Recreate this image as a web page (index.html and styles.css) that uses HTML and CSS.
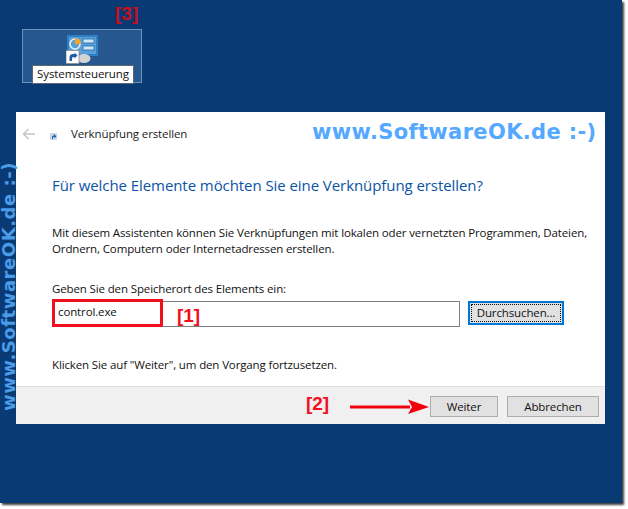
FILE: index.html
```html
<!DOCTYPE html>
<html lang="de">
<head>
<meta charset="utf-8">
<title>Verknüpfung erstellen</title>
<link rel="stylesheet" href="styles.css">
</head>
<body>
<div class="desktop">
  <div class="mark mark-3">[3]</div>
  <div class="shortcut">
    <svg class="shortcut-icon" width="32" height="29" viewBox="0 0 32 29">
      <rect x="1" y="0" width="31" height="21" fill="#2f7fc4"/>
      <rect x="3" y="2" width="27" height="17" fill="#5a9fd8"/>
      <circle cx="9" cy="9" r="5" fill="none" stroke="#e8f2fa" stroke-width="1.5"/>
      <path d="M9 3a6 6 0 0 1 6 6h-6z" fill="#f5a623"/>
      <rect x="17" y="4" width="11" height="4" fill="#cfe6f7" stroke="#1f6cab" stroke-width=".8"/>
      <rect x="17" y="11" width="11" height="4" fill="#cfe6f7" stroke="#1f6cab" stroke-width=".8"/>
      <ellipse cx="18" cy="23.500" rx="6.500" ry="4.500" fill="#d4d4d4"/>
      <rect x="0" y="15.500" width="13" height="13" fill="#fff" stroke="#8a8f96" stroke-width=".8"/>
      <path d="M3.500 26v-3.500a3.500 3.500 0 0 1 3.500-3.500h1.500v-1.500l3 3-3 3v-1.500h-1a1.500 1.500 0 0 0-1.500 1.500v2.500z" fill="#1d5fa8"/>
    </svg>
    <div class="shortcut-label">Systemsteuerung</div>
  </div>

  <section class="wizard">
    <header class="wizard-title">
      <svg class="back" width="14" height="12" viewBox="0 0 14 12">
        <path d="M13 6H2M6.500 1 1.500 6l5 5" fill="none" stroke="#c4c4c4" stroke-width="1.500"/>
      </svg>
      <svg class="mini" width="7" height="7" viewBox="0 0 7 7">
        <rect width="7" height="7" fill="#c9d6e6"/>
        <path d="M2 6V4a1.500 1.500 0 0 1 1.500-1.500H4V1l2.500 2.500L4 5V3.800a1 1 0 0 0-1 1V6z" fill="#1d5fa8"/>
      </svg>
      <span>Verknüpfung erstellen</span>
    </header>
    <div class="wizard-body">
      <h1>Für welche Elemente möchten Sie eine Verknüpfung erstellen?</h1>
      <p class="intro">Mit diesem Assistenten können Sie Verknüpfungen mit lokalen oder vernetzten Programmen, Dateien, Ordnern, Computern oder Internetadressen erstellen.</p>
      <label class="field-label">Geben Sie den Speicherort des Elements ein:</label>
      <div class="field-row">
        <div class="input">control.exe
          <div class="highlight"></div>
          <div class="mark mark-1">[1]</div>
        </div>
        <div class="btn btn-focus"><span>Durchsuchen...</span></div>
      </div>
      <p class="hint">Klicken Sie auf "Weiter", um den Vorgang fortzusetzen.</p>
    </div>
    <footer class="wizard-footer">
      <div class="mark mark-2">[2]</div>
      <svg class="arrow" width="80" height="16" viewBox="0 0 80 16">
        <path d="M0 6.500h60v3H0z" fill="#f0000f"/>
        <path d="M58 0.500 79 8 58 15 62 8z" fill="#f0000f"/>
      </svg>
      <div class="btn btn-next">Weiter</div>
      <div class="btn btn-cancel">Abbrechen</div>
    </footer>
  </section>

  <div class="brand">www.SoftwareOK.de :-)</div>
  <div class="brand-side">www.SoftwareOK.de :-)</div>
</div>
</body>
</html>
```
FILE: styles.css
```css
* { box-sizing: border-box; }
html, body { margin: 0; padding: 0; background: #fff; }
body { width: 628px; height: 509px; overflow: hidden; font-family: "Open Sans", "Noto Sans", sans-serif; }

.desktop {
  position: relative;
  width: 622px;
  height: 503px;
  background: #0a3a74;
  box-shadow: 2px 2px 2px #404040;
}

.mark { position: absolute; font-family: "Liberation Sans", sans-serif; font-weight: 700; color: #f01020; font-size: 19px; line-height: 20px; }
.mark-3 { left: 115px; top: 4px; color: #c80f1c; }
.mark-1 { left: 124px; top: 4px; }
.mark-2 { left: 290px; top: 7px; }

.shortcut {
  position: absolute;
  left: 22px;
  top: 29px;
  width: 120px;
  height: 54px;
  background: #26588f;
  border: 1px solid #6d93ba;
  display: flex;
  flex-direction: column;
  align-items: center;
}
.shortcut-icon { margin: 5px 0 0 -1px; flex: none; }
.shortcut-label {
  position: absolute;
  left: 9px;
  top: 35px;
  width: 102px;
  height: 19px;
  background: #fff;
  border: 1px solid #5c6670;
  font-size: 11.5px;
  letter-spacing: -.1px;
  line-height: 16px;
  color: #111;
  text-align: center;
  white-space: nowrap;
}

.wizard {
  position: absolute;
  left: 16px;
  top: 112px;
  width: 589px;
  height: 312px;
  background: #fff;
  display: flex;
  flex-direction: column;
  font-size: 11.5px;
  letter-spacing: -.13px;
  color: #111;
}
.wizard-title { height: 44px; display: flex; align-items: center; padding: 0 0 0 6px; }
.back { flex: none; }
.mini { flex: none; margin: 5px 0 0 14px; }
.wizard-title span { margin-left: 14px; line-height: 16px; color: #222; }

.wizard-body { flex: 1; padding: 19px 0 0 36px; position: relative; }
h1 { margin: 0; font-weight: 400; font-size: 15px; letter-spacing: -.07px; line-height: 20px; color: #0a54a5; }
.intro { margin: 30px 0 0; width: 545px; line-height: 16px; }
.field-label { display: block; margin-top: 24px; line-height: 16px; }
.field-row { display: flex; gap: 8px; margin-top: 4px; height: 26px; align-items: flex-start; }
.input {
  position: relative;
  width: 408px;
  height: 26px;
  border: 1px solid #808080;
  padding: 2px 0 0 5px;
  line-height: 16px;
  font-size: 11.5px;
}
.highlight { position: absolute; left: -1px; top: -3px; width: 111px; height: 28px; border: 3px solid #f0101c; }

.btn {
  display: flex;
  align-items: center;
  justify-content: center;
  background: #e1e1e1;
  border: 1px solid #adadad;
  line-height: 16px;
}
.btn-focus { width: 96px; height: 24px; border: 2px solid #0078d7; padding: 1px; }
.btn-focus span { flex: 1; align-self: stretch; text-align: center; border: 1px dotted #111; line-height: 15px; }
.hint { margin: 30px 0 0; line-height: 16px; }

.wizard-footer {
  position: relative;
  height: 38px;
  background: #f0f0f0;
  border-top: 1px solid #dfdfdf;
  display: flex;
  align-items: flex-start;
  justify-content: flex-end;
  gap: 9px;
  padding: 9px 6px 0 0;
}
.arrow { position: absolute; left: 334px; top: 12px; }
.btn-next { width: 68px; height: 21px; }
.btn-cancel { width: 92px; height: 21px; }

.brand {
  position: absolute;
  left: 312px;
  top: 119px;
  font-family: "DejaVu Sans", sans-serif;
  font-weight: 700;
  font-size: 21px;
  letter-spacing: .35px;
  line-height: 26px;
  color: #55a8ff;
  white-space: nowrap;
}
.brand-side {
  position: absolute;
  left: 0;
  top: 411px;
  transform-origin: 0 0;
  transform: rotate(-90deg);
  font-family: "DejaVu Sans", sans-serif;
  font-weight: 700;
  font-size: 18px;
  letter-spacing: .55px;
  line-height: 17px;
  color: #4a9be8;
  white-space: nowrap;
}
```
